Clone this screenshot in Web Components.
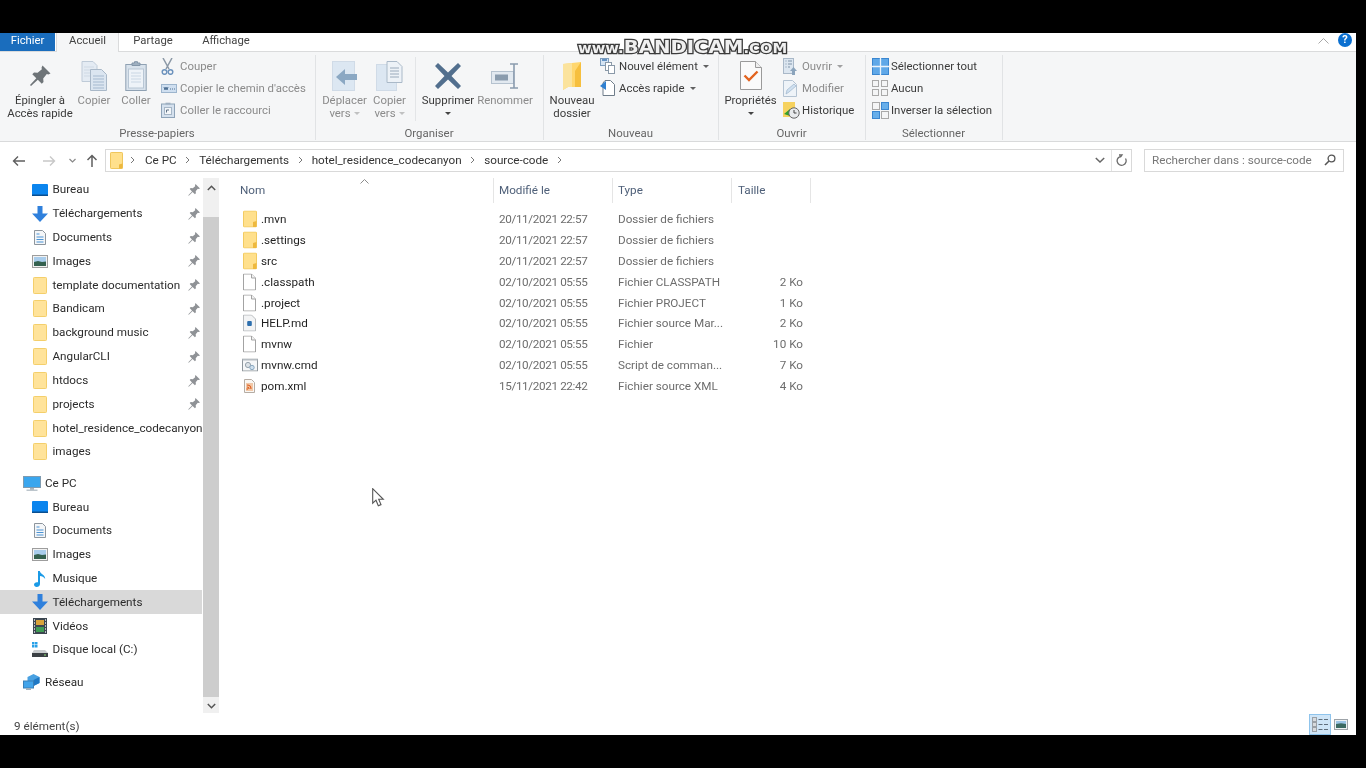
<!DOCTYPE html>
<html lang="fr"><head><meta charset="utf-8"><title>source-code</title>
<style>
html,body{margin:0;padding:0;background:#000;width:1366px;height:768px;overflow:hidden}
body{font:11.7px Roboto,"Liberation Sans",sans-serif;color:#1f1f1f}
</style></head><body>
<fx-window>
  <fx-tabs slot="tabs"></fx-tabs>
  <fx-ribbon slot="ribbon">
    <rb-group w="316" pad="6" label="Presse-papiers">
      <rb-big w="68" icon="bigpin">Épingler à<br>Accès rapide</rb-big>
      <rb-big w="40" off icon="copy">Copier</rb-big>
      <rb-big w="40" ml="2" off icon="paste">Coller</rb-big>
      <rb-col ml="4">
        <rb-small off icon="scissors">Couper</rb-small>
        <rb-small off icon="copypath">Copier le chemin d'accès</rb-small>
        <rb-small off icon="shortcut">Coller le raccourci</rb-small>
      </rb-col>
    </rb-group>
    <rb-group w="228" pad="6" label="Organiser">
      <rb-big w="45" off icon="move" caret="1">Déplacer<br>vers</rb-big>
      <rb-big w="45" off icon="copyto" caret="1">Copier<br>vers</rb-big>
      <rb-sep></rb-sep>
      <rb-big w="56" icon="del" caret="2">Supprimer</rb-big>
      <rb-big w="58" off icon="rename">Renommer</rb-big>
    </rb-group>
    <rb-group w="175" pad="4" label="Nouveau">
      <rb-big w="48" icon="newfolder">Nouveau<br>dossier</rb-big>
      <rb-col ml="3">
        <rb-small icon="newitem" caret="1">Nouvel élément</rb-small>
        <rb-small icon="quick" caret="1">Accès rapide</rb-small>
      </rb-col>
    </rb-group>
    <rb-group w="147" pad="5" label="Ouvrir">
      <rb-big w="53" icon="props" caret="2">Propriétés</rb-big>
      <rb-col ml="5">
        <rb-small off icon="open" caret="1">Ouvrir</rb-small>
        <rb-small off icon="edit">Modifier</rb-small>
        <rb-small icon="history">Historique</rb-small>
      </rb-col>
    </rb-group>
    <rb-group w="137" pad="5" label="Sélectionner">
      <rb-col>
        <rb-small icon="selall">Sélectionner tout</rb-small>
        <rb-small icon="selnone">Aucun</rb-small>
        <rb-small icon="selinv">Inverser la sélection</rb-small>
      </rb-col>
    </rb-group>
  </fx-ribbon>
  <fx-address slot="address"></fx-address>
  <fx-nav slot="nav">
    <nav-row icon="desktop" pin>Bureau</nav-row>
    <nav-row icon="down" pin>Téléchargements</nav-row>
    <nav-row icon="docs" pin>Documents</nav-row>
    <nav-row icon="pics" pin>Images</nav-row>
    <nav-row icon="navfolder" pin>template documentation</nav-row>
    <nav-row icon="navfolder" pin>Bandicam</nav-row>
    <nav-row icon="navfolder" pin>background music</nav-row>
    <nav-row icon="navfolder" pin>AngularCLI</nav-row>
    <nav-row icon="navfolder" pin>htdocs</nav-row>
    <nav-row icon="navfolder" pin>projects</nav-row>
    <nav-row icon="navfolder">hotel_residence_codecanyon</nav-row>
    <nav-row icon="navfolder" gap="7.6">images</nav-row>
    <nav-row icon="pc" root>Ce PC</nav-row>
    <nav-row icon="desktop">Bureau</nav-row>
    <nav-row icon="docs">Documents</nav-row>
    <nav-row icon="pics">Images</nav-row>
    <nav-row icon="music">Musique</nav-row>
    <nav-row icon="down" sel>Téléchargements</nav-row>
    <nav-row icon="video">Vidéos</nav-row>
    <nav-row icon="disk" gap="8.4">Disque local (C:)</nav-row>
    <nav-row icon="net" root>Réseau</nav-row>
  </fx-nav>
  <fx-scroll slot="scroll"></fx-scroll>
  <fx-list slot="list">
    <file-row icon="folder" name=".mvn" date="20/11/2021 22:57" type="Dossier de fichiers"></file-row>
    <file-row icon="folder" name=".settings" date="20/11/2021 22:57" type="Dossier de fichiers"></file-row>
    <file-row icon="folder" name="src" date="20/11/2021 22:57" type="Dossier de fichiers"></file-row>
    <file-row icon="blank" name=".classpath" date="02/10/2021 05:55" type="Fichier CLASSPATH" size="2 Ko"></file-row>
    <file-row icon="blank" name=".project" date="02/10/2021 05:55" type="Fichier PROJECT" size="1 Ko"></file-row>
    <file-row icon="md" name="HELP.md" date="02/10/2021 05:55" type="Fichier source Mar..." size="2 Ko"></file-row>
    <file-row icon="blank" name="mvnw" date="02/10/2021 05:55" type="Fichier" size="10 Ko"></file-row>
    <file-row icon="cmd" name="mvnw.cmd" date="02/10/2021 05:55" type="Script de comman..." size="7 Ko"></file-row>
    <file-row icon="xml" name="pom.xml" date="15/11/2021 22:42" type="Fichier source XML" size="4 Ko"></file-row>
  </fx-list>
  <fx-status slot="status"></fx-status>
</fx-window>
<script>
const ICONS={
bigpin:[24,24,'<path d="M14.5 1.5l8 8-2.2 1-1.5-.4-3.6 4.3.3 3.6-1.7 1.7-4-4-6.8 6.3-1-1 6.3-6.8-4-4 1.7-1.7 3.6.3 4.3-3.6-.4-1.5z" fill="#6e7478"/>'],
copy:[26,30,'<path d="M1 .5h11l4 4v16H1z" fill="#e4ebf3" stroke="#bfcbd8"/><path d="M3 6h10M3 9h10M3 12h10M3 15h10" stroke="#cfd9e4"/><path d="M9.500 8.500h11l5 5v16h-16z" fill="#dbe5f0" stroke="#a9b8c8"/><path d="M12 15h11M12 18h11M12 21h11M12 24h11M12 27h11" stroke="#a5b9cf"/>'],
paste:[22,30,'<rect x=".8" y="3.500" width="20.400" height="26" fill="#d8e2ec" stroke="#8fa1b3"/><rect x="3.500" y="8" width="15" height="19" fill="#eef3f8" stroke="#b8c6d4"/><path d="M7 4.500V2h2.500V.7h3V2H15v2.500z" fill="#9fb0c1" stroke="#8396a9"/><path d="M6 12h10M6 15h10M6 18h10M6 21h10" stroke="#cad7e4"/>'],
scissors:[13,17,'<path d="M2 0l6 11M11 0L5 11" stroke="#8b98a6" stroke-width="1.500" fill="none"/><circle cx="3.500" cy="14" r="2.300" fill="none" stroke="#6d93bd" stroke-width="1.500"/><circle cx="9.500" cy="14" r="2.300" fill="none" stroke="#6d93bd" stroke-width="1.500"/>'],
copypath:[16,9,'<rect x=".5" y=".5" width="15" height="8" fill="#cfdff0" stroke="#9db5cd"/><path d="M3 3l1 3 1-3 1 3 1-3M9 5h1M11 5h1M13 5h1" stroke="#4f7194" fill="none"/>'],
shortcut:[14,16,'<rect x=".5" y="2" width="13" height="13.500" fill="#d5e1ee" stroke="#8ea3b8"/><path d="M4.500 2.500V.7h5v1.800z" fill="#9fb0c1"/><rect x="3.500" y="5.500" width="7" height="7" fill="#f3f6f9" stroke="#a6b6c6"/><path d="M5.500 10.500V8h2.500" stroke="#5d7085" fill="none"/>'],
move:[26,30,'<rect x=".5" y=".5" width="22" height="29" fill="#dce7f2" stroke="#d0dbe7"/><path d="M25 13v6H13v5L4 16l9-8v5z" fill="#8ba8c3"/>'],
copyto:[27,30,'<rect x=".5" y="3.500" width="20" height="26" fill="#dce7f2" stroke="#d0dbe7"/><path d="M11 .5h10l5 5v16H11z" fill="#edf2f7" stroke="#aab9c8"/><path d="M14 7h9M14 10h9M14 13h9M14 16h9" stroke="#9aaabb"/>'],
del:[26,26,'<path d="M3 0l10 9.500L23 0l3 3-9.500 10L26 23l-3 3-10-9.500L3 26l-3-3 9.500-10L0 3z" fill="#526f8e"/>'],
rename:[29,26,'<rect x=".5" y="8.500" width="22" height="12" fill="#e2e9f0" stroke="#b5c2cf"/><rect x="4" y="11.500" width="13" height="6" fill="#8a9cae"/><path d="M19 1h8M23 1v24M19 25h8" stroke="#8a9cae" stroke-width="1.600" fill="none"/>'],
newfolder:[20,28,'<path d="M1 2l18-2v25H6l-5 3z" fill="#ffd76f"/><path d="M1 2l9-1v24H6l-5 3z" fill="#fbe39d"/><path d="M19 0v25h-6V9z" fill="#f6bf3e"/>'],
newitem:[15,16,'<rect x=".5" y=".5" width="8" height="7" fill="#d5e4f3" stroke="#7d9dbd"/><path d="M2 2h5" stroke="#3f78b4" stroke-width="1.500"/><rect x="5.500" y="4.500" width="6" height="8" fill="#fff" stroke="#8a99a8"/><rect x="8.500" y="7.500" width="6" height="8" fill="#fff" stroke="#8a99a8"/>'],
quick:[15,16,'<path d="M5 .5h5.500l4 4v11H3V3z" fill="#fff" stroke="#6f7d8a"/><path d="M0 6l6-5v9z" fill="#2f7fd0"/>'],
props:[22,29,'<path d="M.5.500h15l6 6v22H.5z" fill="#fafafa" stroke="#9a9a9a"/><path d="M15.500.500v6h6" fill="#eee" stroke="#9a9a9a"/><path d="M4.500 14.500l4.500 4.500 8.500-8.500" fill="none" stroke="#e2631e" stroke-width="2.400"/>'],
open:[14,17,'<rect x=".5" y=".5" width="10" height="15" fill="#dce6f0" stroke="#a9b8c8"/><path d="M2.500 3h1M5 3h4M2.500 6h1M5 6h4M2.500 9h1M5 9h2" stroke="#7e93a8"/><path d="M10.500 9l3.500 4h-2v4h-3v-4h-2z" fill="#8ba4bc"/>'],
edit:[14,17,'<path d="M.5.500h9l4 4v12H.5z" fill="#eef3f8" stroke="#b4c3d2"/><path d="M3 14l1-4 7-6 2 2-7 6z" fill="#cfe0f0" stroke="#9fb6cd" stroke-width=".7"/>'],
history:[17,17,'<rect x="0" y="0" width="12" height="15" fill="#f6d25f"/><path d="M1 12l6-5v3h3l-3 4z" fill="#33a02c"/><circle cx="11" cy="11" r="5.200" fill="#e8eaec" stroke="#666"/><path d="M11 8v3h2.500" stroke="#444" fill="none"/>'],
selall:[17,17,'<rect x=".5" y=".5" width="16" height="16" fill="#5fa8e8" stroke="#3a86d0"/><path d="M8.500 0v17M0 8.500h17" stroke="#eaf3fb" stroke-width="1.300"/>'],
selnone:[16,16,'<g fill="#f4f5f6" stroke="#a9a9a9"><rect x=".5" y=".5" width="6" height="6"/><rect x="9.500" y=".5" width="6" height="6"/><rect x=".5" y="9.500" width="6" height="6"/><rect x="9.500" y="9.500" width="6" height="6"/></g>'],
selinv:[17,17,'<g stroke="#a9a9a9" fill="#f4f5f6"><rect x=".5" y=".5" width="7" height="7"/><rect x="9.500" y="9.500" width="7" height="7"/></g><g fill="#66aeea" stroke="#3a86d0"><rect x="9.500" y=".5" width="7" height="7"/><rect x=".5" y="9.500" width="7" height="7"/></g>'],
addr:[13,17,'<rect x=".5" y=".5" width="12" height="16" rx=".7" fill="#ffe08c" stroke="#efc65c"/><path d="M9 16.500v-4l3.500-1v5z" fill="#edb83d"/>'],
folder:[14,17,'<rect x=".5" y=".5" width="13" height="16" rx=".8" fill="#ffe08c" stroke="#f2cb62"/><path d="M10 16.500v-5l3.500-1v6z" fill="#eeb93f"/>'],
navfolder:[14,17,'<rect x=".5" y=".5" width="13" height="16" rx=".8" fill="#ffe39a" stroke="#f4cf6b"/>'],
desktop:[16,12,'<rect x="0" y="0" width="16" height="12" rx="1" fill="#0b85ee"/><rect x="0" y="10.500" width="16" height="1.500" fill="#0a4f90"/>'],
down:[16,16,'<path d="M5.500 0h5v7.500H16L8 16 0 7.500h5.500z" fill="#2f80dc"/>'],
docs:[12,15,'<path d="M.5.500h8l3 3v11H.5z" fill="#f4f6f8" stroke="#8d959d"/><path d="M2.500 4h3M2.500 7h7M2.500 9.500h7M2.500 12h7" stroke="#4b93d5"/>'],
pics:[16,13,'<rect x=".5" y=".5" width="15" height="12" fill="#f2f2f2" stroke="#9d9d9d"/><rect x="2" y="2" width="12" height="5" fill="#a9cdec"/><path d="M2 7l4-1 4 1 4-.5V11H2z" fill="#34614f"/>'],
music:[12,16,'<path d="M4 0h1.800c.4 3 5.400 3.500 5.400 8-1.200-2-3.500-2.700-5.200-3v8c0 2-1.700 3-3.300 3C1.200 16 0 15 0 13.600c0-1.700 2-2.900 4-2.300z" fill="#1a9ae6"/>'],
video:[14,16,'<rect width="14" height="16" fill="#3c4650"/><rect x="3" y="2" width="8" height="5" fill="#d9a33a"/><rect x="3" y="9" width="8" height="5" fill="#3f9b54"/><path d="M1 2h1M1 5h1M1 8h1M1 11h1M1 14h1M12 2h1M12 5h1M12 8h1M12 11h1M12 14h1" stroke="#dfe3e6" stroke-width="1.400"/>'],
disk:[16,15,'<path d="M0 0h2.500v2.500H0zM3 0h2.500v2.500H3zM0 3h2.500v2.500H0zM3 3h2.500v2.500H3z" fill="#27a0e8"/><path d="M2 8h11l3 3v4H0v-4z" fill="#c9ccce"/><rect y="11" width="16" height="4" fill="#3b4044"/><rect x="12" y="12.500" width="2" height="1" fill="#8fe07b"/>'],
pc:[18,15,'<rect x=".5" y=".5" width="17" height="11" fill="#3aa6ee" stroke="#7f9bb0"/><rect x="7" y="12" width="4" height="2" fill="#a9b4bd"/><rect x="3.500" y="13.500" width="11" height="1.500" fill="#bcc5cc"/>'],
net:[18,16,'<path d="M10.500 0l6 3v6l-6 3-6-3V3z" fill="#49a1e2"/><path d="M10.500 6l6-3v6l-6 3z" fill="#1f78c4"/><rect x=".5" y="7" width="10" height="7" fill="#42a4ea" stroke="#3980b8"/><rect x="3" y="14" width="5" height="2" fill="#9fb0bc"/>'],
blank:[13,17,'<path d="M.5.500h8l4 4v12H.5z" fill="#fff" stroke="#a3a3a3"/><path d="M8.500.500v4h4" fill="#f2f2f2" stroke="#a3a3a3"/>'],
md:[13,17,'<path d="M.5.500h8l4 4v12H.5z" fill="#f3f4f5" stroke="#b9bcbf"/><rect x="4.200" y="6.500" width="4.600" height="5" rx="1" fill="#2d6fae"/>'],
cmd:[16,13,'<rect x=".5" y=".5" width="15" height="12" fill="#f6f7f8" stroke="#8f969c"/><rect x=".5" y=".5" width="15" height="1.500" fill="#b7bdc2"/><circle cx="6" cy="6.500" r="2.600" fill="#dde3e8" stroke="#97a2ac"/><circle cx="10" cy="9" r="2.200" fill="#cfe0ee" stroke="#8ba8c0"/>'],
xml:[11,14,'<path d="M.5.500h7l3 3v10H.5z" fill="#f9f7f4" stroke="#b5aca4"/><rect x="2" y="4" width="7" height="8" fill="#f1c8a8"/><path d="M3 6c2.500 0 4 1.500 4 4M3 8c1.200 0 2 .8 2 2" stroke="#dd5b1a" fill="none" stroke-width="1.100"/><circle cx="3.200" cy="10" r=".8" fill="#dd5b1a"/>'],
pin:[12,12,'<path d="M7.500 0l4.500 4.500-1.300.5-.9-.2-2.100 2.500.2 2-1 1-2.300-2.300L.8 11.700l-.5-.5 3.700-3.800L1.700 5.100l1-1 2 .2L7.200 2.200 7 1.300z" fill="#8f9296"/>'],
details:[17,15,'<g fill="#d7dadd" stroke="#9aa0a6"><rect x=".5" y=".5" width="4" height="4"/><rect x=".5" y="5.500" width="4" height="4"/><rect x=".5" y="10.500" width="4" height="4"/></g><path d="M6.500 2.500h4M12 2.500h4M6.500 7.500h4M12 7.500h4M6.500 12.500h4M12 12.500h4" stroke="#5f6e7c" stroke-width="1.200"/>'],
thumbs:[14,11,'<rect x=".5" y=".5" width="13" height="10" fill="#eef1f3" stroke="#9da3a8"/><rect x="2" y="2" width="10" height="3" fill="#9cc5e6"/><path d="M2 5l5-.7 5 .7v4H2z" fill="#3b6a62"/>'],
};
function svg(n){const i=ICONS[n];if(!i)return'';return `<svg xmlns="http://www.w3.org/2000/svg" width="${i[0]}" height="${i[1]}" viewBox="0 0 ${i[0]} ${i[1]}" style="display:block" aria-hidden="true">${i[2]}</svg>`}
class Base extends HTMLElement{
  constructor(){super();this.attachShadow({mode:'open'})}
  connectedCallback(){this.shadowRoot.innerHTML=`<style>${this.css()}</style>${this.html()}`}
  a(n,d=''){return this.hasAttribute(n)?this.getAttribute(n):d}
}
const def=(n,css,html)=>customElements.define(n,class extends Base{css(){return css.call(this)}html(){return html.call(this)}});

def('fx-window',()=>`
:host{display:block;width:1356px;height:702px;margin-top:33px;background:#fff;position:relative;overflow:hidden;filter:blur(.4px)}
.main{display:flex;height:538px}
.wm{position:absolute;left:578px;top:5px;font:bold 18px/18px "DejaVu Sans",sans-serif;color:#f0f0f0;-webkit-text-stroke:2.5px #3c3c3c;paint-order:stroke fill;white-space:nowrap;transform-origin:left center;transform:scaleX(1.095)}
.wm span{font-size:13.5px}
.cursor{position:absolute;left:372px;top:455px}
`,()=>`
<slot name="tabs"></slot><slot name="ribbon"></slot><slot name="address"></slot>
<div class="main"><slot name="nav"></slot><slot name="scroll"></slot><slot name="list"></slot></div>
<slot name="status"></slot>
<div class="wm"><span>www.</span>BANDICAM<span>.COM</span></div>
<svg class="cursor" width="13" height="20" viewBox="0 0 13 20"><path d="M.7.7v14.500l3.300-3 2.300 5.600 2.700-1.200-2.300-5.300h4.600z" fill="#fff" stroke="#555" stroke-width="1.100"/></svg>`);

def('fx-tabs',()=>`
:host{display:flex;height:18px;position:relative;border-bottom:1px solid #dadbdc;font-size:11.3px;color:#444}
.f{width:55px;background:#1a6dbd;color:#fff;display:flex;align-items:center;justify-content:center;height:18px;box-sizing:border-box;padding-bottom:4px}
.a{width:63px;margin-left:1px;height:19px;background:#f5f6f7;border:solid #dadbdc;border-width:0 1px;box-sizing:border-box;display:flex;align-items:center;justify-content:center;padding-bottom:5px}
.t{display:flex;align-items:center;justify-content:center;height:18px;box-sizing:border-box;padding-bottom:4px}
.sp{flex:1}
.up{margin:-3px 9px 0 0;align-self:center}
.help{width:14px;height:14px;border-radius:50%;background:#0a6fd0;color:#fff;font:bold 11px/14px Roboto,sans-serif;text-align:center;margin:-4px 4px 0 0;align-self:center}
`,()=>`<div class="f">Fichier</div><div class="a">Accueil</div><div class="t" style="width:68px">Partage</div><div class="t" style="width:78px">Affichage</div><div class="sp"></div>
<svg class="up" width="11" height="6" viewBox="0 0 11 6"><path d="M.5 5.500l5-5 5 5" fill="none" stroke="#a8a8a8"/></svg><div class="help">?</div>`);

def('fx-ribbon',()=>`:host{display:flex;height:90px;box-sizing:border-box;background:#f5f6f7;border-bottom:1px solid #d9dadb;padding-top:3px}`,()=>`<slot></slot>`);

def('rb-group',function(){return `
:host{display:flex;flex-direction:column;width:${this.a('w')}px;box-sizing:border-box;height:85px;border-right:1px solid #e1e3e5;flex:none;padding-left:${this.a('pad','0')}px}
.c{display:flex;height:71px}
.l{height:14px;line-height:14px;text-align:center;color:#666;font-size:11.4px;margin-left:-${this.a('pad','0')}px;margin-top:1px;padding-right:1px}
`},function(){return `<div class="c"><slot></slot></div><div class="l">${this.a('label')}</div>`});

def('rb-sep',()=>`:host{display:block;width:1px;height:64px;background:#e3e5e7;margin:2px 4px 0 3px}`,()=>``);
def('rb-col',function(){return `:host{display:flex;flex-direction:column;margin-left:${this.a('ml','0')}px}`},()=>`<slot></slot>`);

def('rb-big',function(){return `
:host{display:flex;flex-direction:column;align-items:center;width:${this.a('w')}px;flex:none;margin-left:${this.a('ml','0')}px;font-size:11.4px;line-height:13px;text-align:center;color:${this.hasAttribute('off')?'#8b8b8b':'#3b3b3b'};white-space:nowrap}
.i{height:35px;margin-top:3px;display:flex;align-items:center;justify-content:center;margin-bottom:1px}
.lab{position:relative}
.c{display:inline-block;width:0;height:0;border:3px solid transparent;border-top:3px solid currentColor;border-bottom:0;vertical-align:2px;margin-left:3px;opacity:.5}
.c2{display:block;width:0;height:0;margin:5px auto 0;border:3px solid transparent;border-top:3px solid #444;border-bottom:0}
`},function(){const c=this.a('caret');return `<div class="i">${svg(this.a('icon'))}</div><div class="lab"><slot></slot>${c==='1'?'<span class="c"></span>':''}${c==='2'?'<span class="c2"></span>':''}</div>`});

def('rb-small',function(){return `
:host{display:flex;align-items:center;height:22px;font-size:11.4px;white-space:nowrap;color:${this.hasAttribute('off')?'#8b8b8b':'#3b3b3b'}}
.i{width:20px;flex:none;display:flex;padding-left:1px;box-sizing:border-box}
.c{width:0;height:0;border:3px solid transparent;border-top:3px solid currentColor;border-bottom:0;margin-left:5px;opacity:.8}
`},function(){return `<div class="i">${svg(this.a('icon'))}</div><slot></slot>${this.a('caret')?'<span class="c"></span>':''}`});

def('fx-address',()=>`
:host{display:flex;align-items:center;height:36px;box-sizing:border-box;padding-top:1px;font-size:11.7px;color:#333;background:#fff}
.nv{width:105px;display:flex;align-items:center;flex:none;position:relative;height:20px}
.nv svg{position:absolute;top:4px}
.box{width:1027px;height:23px;box-sizing:border-box;border:1px solid #d9d9d9;display:flex;align-items:center;padding-left:4px;flex:none;padding-bottom:1px}
.box .f{margin-right:7px;flex:none;margin-top:1px}
.s{width:22.5px;flex:none;display:flex;justify-content:center}
.s0{width:15px;flex:none}
.sp{flex:1}
.dd{width:18px;display:flex;justify-content:center;height:21px;align-items:center;margin-right:2px}
.rf{width:20px;height:21px;border-left:1px solid #e2e2e2;display:flex;justify-content:center;align-items:center;box-sizing:border-box}
.search{margin-left:12px;width:200px;height:23px;box-sizing:border-box;border:1px solid #d9d9d9;display:flex;align-items:center;padding:0 7px 1px 7px;color:#777;white-space:nowrap;justify-content:space-between}
`,()=>{
const sep='<svg width="5" height="8" viewBox="0 0 5 8" style="display:block"><path d="M1 1l3 3-3 3" fill="none" stroke="#777"/></svg>';
return `<div class="nv">
<svg style="left:12px" width="14" height="12" viewBox="0 0 14 12"><path d="M13 6H2M6 1.500L1.500 6 6 10.500" fill="none" stroke="#5f5f5f" stroke-width="1.400"/></svg>
<svg style="left:42px" width="14" height="12" viewBox="0 0 14 12"><path d="M1 6h11M8 1.500L12.500 6 8 10.500" fill="none" stroke="#c8c8c8" stroke-width="1.400"/></svg>
<svg style="left:69px;top:7px" width="7" height="5" viewBox="0 0 7 5"><path d="M.5 1L3.500 4 6.500 1" fill="none" stroke="#888" stroke-width="1.200"/></svg>
<svg style="left:86px;top:3px" width="12" height="14" viewBox="0 0 12 14"><path d="M6 13V2M1.500 6L6 1.500 10.500 6" fill="none" stroke="#5f5f5f" stroke-width="1.500"/></svg>
</div>
<div class="box"><div class="f">${svg('addr')}</div><div class="s0">${sep}</div><span>Ce PC</span><div class="s">${sep}</div><span>Téléchargements</span><div class="s">${sep}</div><span>hotel_residence_codecanyon</span><div class="s">${sep}</div><span>source-code</span><div class="s">${sep}</div><div class="sp"></div>
<div class="dd"><svg width="10" height="6" viewBox="0 0 10 6"><path d="M.8 1L5 5l4.200-4" fill="none" stroke="#666" stroke-width="1.500"/></svg></div>
<div class="rf"><svg width="11" height="13" viewBox="0 0 11 13"><path d="M3 1h3L4.500 3.200M9.500 4.500a4.500 4.500 0 1 1-4-2.200" fill="none" stroke="#6a6a6a" stroke-width="1.300"/></svg></div></div>
<div class="search"><span>Rechercher dans : source-code</span><svg width="12" height="12" viewBox="0 0 12 12"><circle cx="7.500" cy="4.500" r="3.400" fill="none" stroke="#555" stroke-width="1.300"/><path d="M5 7L1 11" stroke="#555" stroke-width="1.600"/></svg></div>`});

def('fx-nav',()=>`:host{display:block;width:203px;height:538px;overflow:hidden;flex:none;background:#fff;font-size:11.7px}`,()=>`<slot></slot>`);

def('nav-row',function(){const root=this.hasAttribute('root');return `
:host{display:flex;align-items:center;height:23.82px;width:203px;position:relative;white-space:nowrap;overflow:hidden;color:#2b2b2b;${this.hasAttribute('sel')?'background:#d9d9d9;width:202px;':''}${this.hasAttribute('gap')?`margin-bottom:${this.a('gap')}px;`:''}}
.i{flex:none;width:${root?18:16}px;margin-left:${root?23:32}px;margin-right:${root?4:4.5}px;display:flex;justify-content:center}
.p{position:absolute;left:188px;top:6px;background:#fff;width:15px}
.tx{padding-bottom:1px}
`},function(){return `<div class="i">${svg(this.a('icon'))}</div><div class="tx"><slot></slot></div>${this.hasAttribute('pin')?`<div class="p">${svg('pin')}</div>`:''}`});

def('fx-scroll',()=>`
:host{display:flex;flex-direction:column;width:16px;height:535px;background:#f0f0f0;flex:none;align-items:center}
.b{height:17px;display:flex;align-items:center;justify-content:center;flex:none;width:100%}
.g{height:21px;flex:none}
.t{height:480px;background:#cdcdcd;width:100%;flex:none}
`,()=>`<div class="b" style="padding-top:1px"><svg width="9" height="6" viewBox="0 0 9 6"><path d="M.8 5L4.500 1.300 8.200 5" fill="none" stroke="#555" stroke-width="1.500"/></svg></div><div class="g"></div><div class="t"></div><div class="b"><svg width="9" height="6" viewBox="0 0 9 6"><path d="M.8 1L4.500 4.700 8.200 1" fill="none" stroke="#555" stroke-width="1.500"/></svg></div>`);

def('fx-list',()=>`
:host{display:block;flex:1;padding-left:14px;font-size:11.7px;position:relative}
.h{display:flex;height:25px;margin-bottom:6px;color:#4f6079}
.h div{box-sizing:border-box;border-right:1px solid #e5e5e5;display:flex;align-items:center;height:25px;padding-bottom:1px}
.car{position:absolute;left:141px;top:1px}
`,()=>`<div class="h"><div style="width:261px;padding-left:7px">Nom</div><div style="width:119px;padding-left:5px">Modifié le</div><div style="width:119px;padding-left:5px">Type</div><div style="width:79px;padding-left:6px">Taille</div></div>
<svg class="car" width="9" height="5" viewBox="0 0 9 5"><path d="M.5 4.500l4-4 4 4" fill="none" stroke="#8c8c8c"/></svg><slot></slot>`);

def('file-row',()=>`
:host{display:flex;align-items:center;height:20.8px;color:#6d6d6d;white-space:nowrap}
.n{width:260px;display:flex;align-items:center;color:#1f1f1f;flex:none;position:relative;padding-left:28px;box-sizing:border-box}
.i{position:absolute;left:0;width:33px;display:flex;justify-content:center;box-sizing:border-box;top:50%;transform:translateY(-50%)}
.d{width:119px;padding-left:6px;box-sizing:border-box;flex:none;letter-spacing:-.36px}
.t{width:119px;padding-left:6px;box-sizing:border-box;flex:none}
.z{width:79px;text-align:right;padding-right:7px;box-sizing:border-box;flex:none}
`,function(){return `<div class="n"><div class="i">${svg(this.a('icon'))}</div>${this.a('name')}</div><div class="d">${this.a('date')}</div><div class="t">${this.a('type')}</div><div class="z">${this.a('size')}</div>`});

def('fx-status',()=>`
:host{display:flex;align-items:center;height:19px;padding-left:14px;color:#444;font-size:11.7px;position:relative;background:#fff}
.v{position:absolute;left:1309px;top:-2px;width:22px;height:21px;background:#cfe5f7;border:1px solid #8fc4ec;box-sizing:border-box;display:flex;align-items:center;justify-content:center}
.w{position:absolute;left:1334px;top:3px}
`,()=>`9 élément(s)<div class="v">${svg('details')}</div><div class="w">${svg('thumbs')}</div>`);
</script>
</body></html>
